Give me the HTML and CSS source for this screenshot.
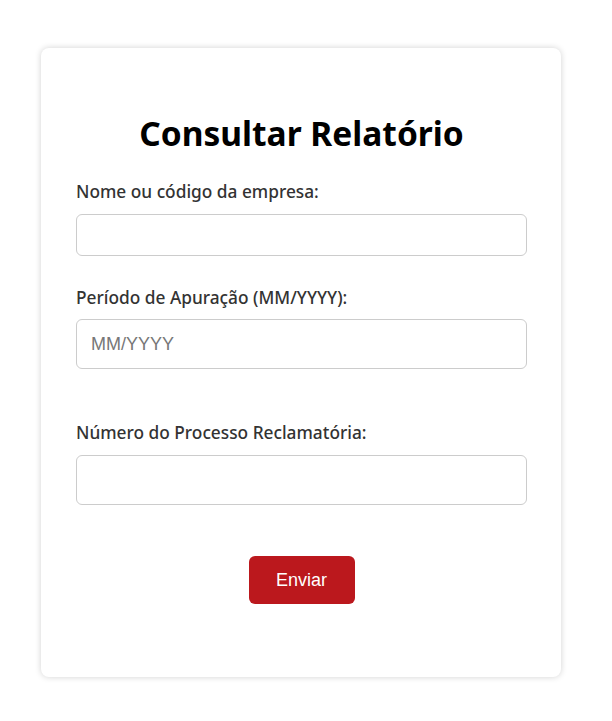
FILE: index.html
```html
<!DOCTYPE html>
<html lang="pt-BR">
<head>
<meta charset="utf-8">
<title>Consultar Relatório</title>
<link rel="stylesheet" href="styles.css">
</head>
<body>
<div class="card">
  <h1 class="title">Consultar Relatório</h1>
  <form class="form">
    <label class="label" for="empresa">Nome ou código da empresa:</label>
    <input class="input input-sm" id="empresa" type="text">
    <label class="label label-2" for="periodo">Período de Apuração (MM/YYYY):</label>
    <input class="input" id="periodo" type="text" placeholder="MM/YYYY">
    <label class="label label-3" for="processo">Número do Processo Reclamatória:</label>
    <input class="input" id="processo" type="text">
    <div class="actions">
      <button class="button" type="button">Enviar</button>
    </div>
  </form>
</div>
</body>
</html>
```

FILE: styles.css
```css
html, body {
  margin: 0;
  padding: 0;
  background: #ffffff;
}
body {
  font-family: "Noto Sans", "Open Sans", sans-serif;
  padding: 48px 0 40px 41px;
}
.card {
  box-sizing: border-box;
  width: 520px;
  background: #fff;
  border-radius: 8px;
  box-shadow: 0 0 6px rgba(0, 0, 0, 0.18);
  padding: 65px 34px 73px 35px;
}
.title {
  margin: 0 0 28px;
  font-size: 33.5px;
  line-height: 40px;
  font-weight: 700;
  text-align: center;
  color: #000;
}
.form {
  display: flex;
  flex-direction: column;
}
.label {
  font-size: 17.3px;
  line-height: 22px;
  font-weight: 500;
  color: #333;
  margin-bottom: 11px;
}
.label-2 {
  margin-top: 31px;
  margin-bottom: 10px;
}
.label-3 {
  margin-top: 53px;
}
.input {
  box-sizing: border-box;
  width: 451px;
  height: 50px;
  border: 1px solid #ccc;
  border-radius: 6px;
  padding: 0 14px;
  font-family: "Liberation Sans", Arial, sans-serif;
  font-size: 18px;
  color: #333;
  background: #fff;
  outline: none;
}
.input-sm {
  height: 42px;
}
.input::placeholder {
  color: #777;
}
.actions {
  display: flex;
  justify-content: center;
  margin-top: 51px;
}
.button {
  width: 106px;
  height: 48px;
  border: none;
  border-radius: 6px;
  background: #bb181d;
  color: #fff;
  font-family: "Liberation Sans", Arial, sans-serif;
  font-size: 18px;
  cursor: pointer;
}
```
